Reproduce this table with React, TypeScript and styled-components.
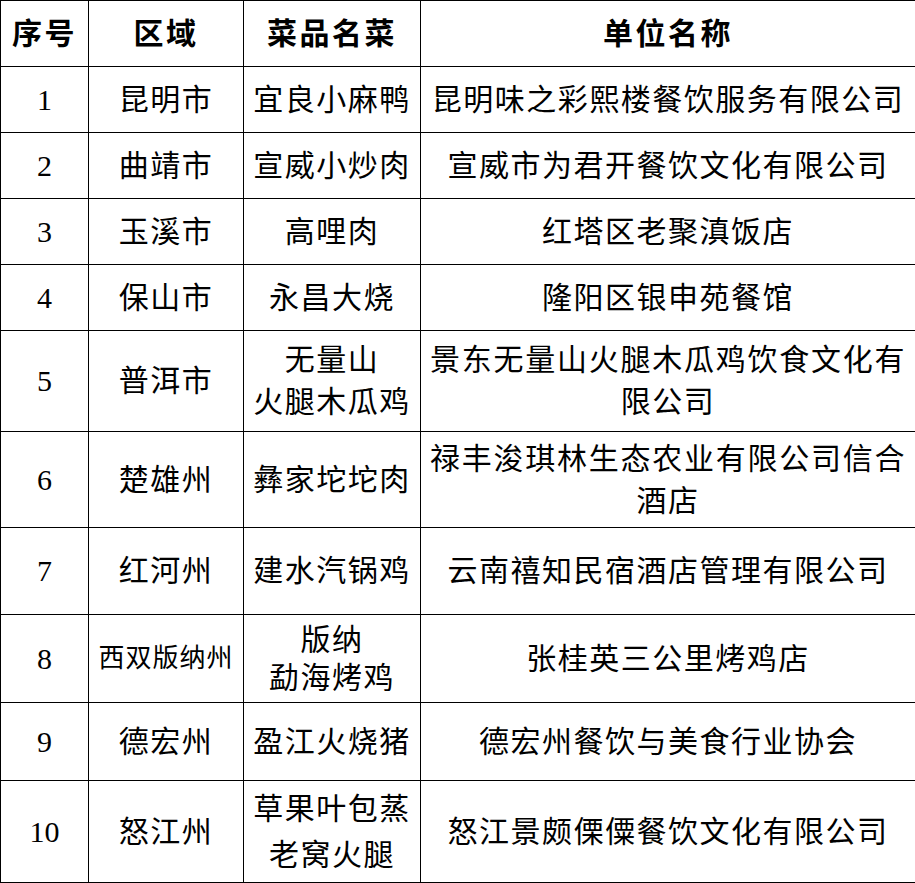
import styled, { createGlobalStyle } from "styled-components";

const GlobalStyle = createGlobalStyle`
  html, body {
    margin: 0;
    padding: 0;
    background: #ffffff;
  }
  body {
    font-family: "Liberation Serif", "Noto Sans CJK SC", serif;
    color: #000000;
  }
`;

const COLUMNS = "88px 155px 177px 495px";

const Table = styled.div`
  display: flex;
  flex-direction: column;
  width: fit-content;
  border-top: 1px solid #000;
  border-left: 1px solid #000;
  box-sizing: border-box;
`;

const Row = styled.div<{ $h: number }>`
  display: grid;
  grid-template-columns: ${COLUMNS};
  height: ${(p) => p.$h}px;
`;

const Cell = styled.div<{ $lh?: number; $size?: number; $spacing?: number; $head?: boolean }>`
  box-sizing: border-box;
  border-right: 1px solid #000;
  border-bottom: 1px solid #000;
  display: flex;
  flex-direction: column;
  justify-content: center;
  align-items: stretch;
  padding: 0 9px;
  text-align: center;
  font-size: ${(p) => p.$size ?? 30}px;
  font-weight: ${(p) => (p.$head ? 700 : 400)};
  letter-spacing: ${(p) => p.$spacing ?? 1.5}px;
  line-height: ${(p) => p.$lh ?? 42}px;
  white-space: nowrap;
  overflow: hidden;
`;

const Line = styled.div<{ $justify?: boolean }>`
  text-align: ${(p) => (p.$justify ? "justify" : "center")};
  text-align-last: ${(p) => (p.$justify ? "justify" : "center")};
`;

type Entry = {
  no: string;
  area: string;
  dish: string[];
  unit: string[];
  h: number;
  areaSmall?: boolean;
  dishLh?: number;
};

const rows: Entry[] = [
  { no: "1", area: "昆明市", dish: ["宜良小麻鸭"], unit: ["昆明味之彩熙楼餐饮服务有限公司"], h: 66 },
  { no: "2", area: "曲靖市", dish: ["宣威小炒肉"], unit: ["宣威市为君开餐饮文化有限公司"], h: 66 },
  { no: "3", area: "玉溪市", dish: ["高哩肉"], unit: ["红塔区老聚滇饭店"], h: 66 },
  { no: "4", area: "保山市", dish: ["永昌大烧"], unit: ["隆阳区银申苑餐馆"], h: 66 },
  {
    no: "5",
    area: "普洱市",
    dish: ["无量山", "火腿木瓜鸡"],
    unit: ["景东无量山火腿木瓜鸡饮食文化有", "限公司"],
    h: 101,
  },
  {
    no: "6",
    area: "楚雄州",
    dish: ["彝家坨坨肉"],
    unit: ["禄丰浚琪林生态农业有限公司信合", "酒店"],
    h: 96,
  },
  { no: "7", area: "红河州", dish: ["建水汽锅鸡"], unit: ["云南禧知民宿酒店管理有限公司"], h: 87 },
  {
    no: "8",
    area: "西双版纳州",
    areaSmall: true,
    dish: ["版纳", "勐海烤鸡"],
    dishLh: 38,
    unit: ["张桂英三公里烤鸡店"],
    h: 88,
  },
  { no: "9", area: "德宏州", dish: ["盈江火烧猪"], unit: ["德宏州餐饮与美食行业协会"], h: 78 },
  {
    no: "10",
    area: "怒江州",
    dish: ["草果叶包蒸", "老窝火腿"],
    dishLh: 46,
    unit: ["怒江景颇傈僳餐饮文化有限公司"],
    h: 102,
  },
];

const App: React.FC = () => {
  return (
    <>
      <GlobalStyle />
      <Table>
        <Row $h={66}>
          <Cell $head $spacing={2.5}>序号</Cell>
          <Cell $head $spacing={2.5}>区域</Cell>
          <Cell $head $spacing={2.5}>菜品名菜</Cell>
          <Cell $head $spacing={2.5}>单位名称</Cell>
        </Row>
        {rows.map((r) => (
          <Row key={r.no} $h={r.h}>
            <Cell $spacing={0}>{r.no}</Cell>
            <Cell $size={r.areaSmall ? 26 : 30} $spacing={r.areaSmall ? 1 : 1.5}>
              {r.area}
            </Cell>
            <Cell $lh={r.dishLh}>
              {r.dish.map((d) => (
                <Line key={d}>{d}</Line>
              ))}
            </Cell>
            <Cell>
              {r.unit.map((u, i) => (
                <Line key={u} $justify={r.unit.length > 1 && i === 0}>
                  {u}
                </Line>
              ))}
            </Cell>
          </Row>
        ))}
      </Table>
    </>
  );
};

export default App;
